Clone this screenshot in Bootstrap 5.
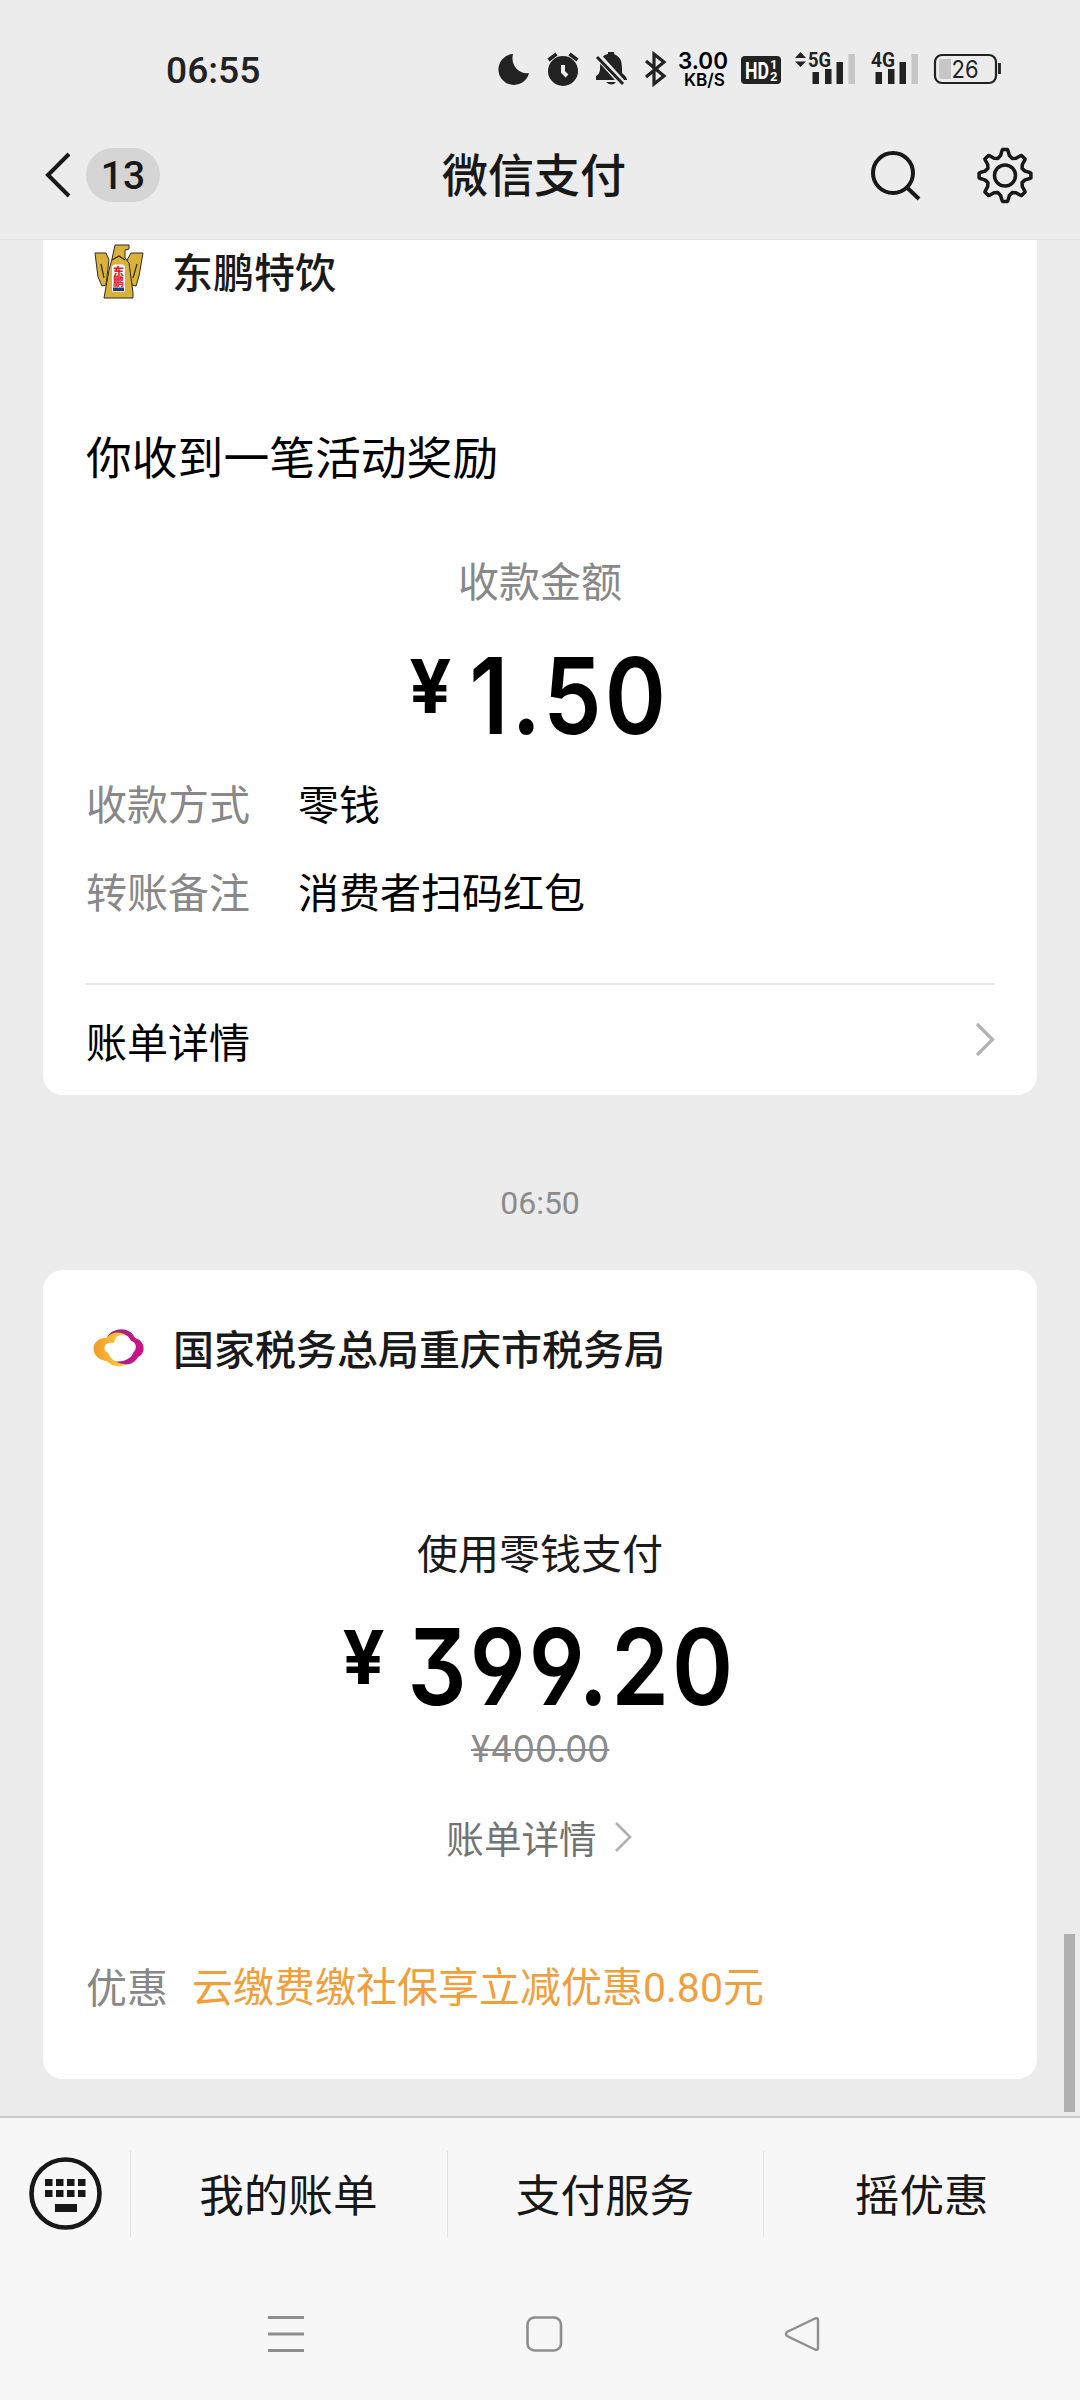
<!DOCTYPE html>
<html lang="zh-CN">
<head>
<meta charset="utf-8">
<meta name="viewport" content="width=device-width, initial-scale=1">
<title>微信支付</title>
<link href="https://cdn.jsdelivr.net/npm/bootstrap@5.3.0/dist/css/bootstrap.min.css" rel="stylesheet">
<style>
body{width:1080px;height:2400px;overflow:hidden;background:#ececec;color:#000;font-family:"Noto Sans CJK SC",sans-serif;font-size:41px;line-height:60px}
svg{display:block;flex:none;overflow:visible}
.statusbar{height:110px;padding-left:166px}
.clock{width:334px;font:500 37.2px/60px Roboto,sans-serif;color:#222;padding-top:40px}
.sysicons{padding-top:50px}
.topbar{height:130px;color:#181818;border-bottom:1px solid #e0e0e0}
.unread{width:74px;height:54px;background:#d5d5d5;border-radius:27px;font:500 39px/56px Roboto,sans-serif;margin-left:6px}
.apptitle{font-size:46px;font-weight:500;margin-left:282px;margin-top:-5px}
.chat{height:1876px;position:relative}
.paycard{margin:0 43px;background:#fff;padding:0 43px}
.first{border-radius:0 0 20px 20px;height:855px}
.second{border-radius:20px;height:809px}
.muted{color:#888}
.payee{font-weight:500;color:#1a1a1a;height:66px}
.payee span{margin-left:17px;margin-top:-6px}
.payee.head2 span{margin-left:16px;margin-top:-5px}
.head2{height:158px}
.notice{font-size:45.8px;margin-top:119px}
.lbl{height:50px;line-height:50px}
.amount{height:104px;font:600 106px/104px Inter,sans-serif;font-feature-settings:"ss01","cv04","cv09"}
.yen{font-size:74px;font-weight:700;line-height:85px}
.digits{transform:scaleX(.875);letter-spacing:3.5px;white-space:nowrap}
.amt-a .yen{margin-left:13px}
.amt-a .digits{margin-left:4px}
.amt-b .yen{margin-left:22px}
.amt-b .digits{margin-left:-1px}
.field span:first-child{width:212px}
.billrow{height:112px;border-top:2px solid #e5e5e5;margin-top:63px}
.stamp{height:175px;padding-top:41px;font:400 32px/134px Roboto,sans-serif;color:#8b8b8b}
.oldprice{height:40px;margin-top:10px;font:400 37px/40px Inter,sans-serif;color:#8a8a8a}
.oldprice s{display:inline-block;transform:scaleX(.945);text-decoration-thickness:2px}
.more{font-size:37.6px;color:#737373;margin-top:43px;gap:17px}
.promo{color:#f19f3c;font-family:Roboto,"Noto Sans CJK SC",sans-serif;margin-left:24px;padding-top:3px}
.thumb{position:absolute;left:1064px;top:1694px;width:11px;height:178px;background:#b0b0b0}
.menubar{height:154px;background:#f7f7f7;border-top:2px solid #cbcbcb;color:#181818;font-size:44.6px}
.menubar a{color:inherit;text-decoration:none;width:317px;height:86px;border-left:1px solid #e2e2e2;line-height:83px;padding-right:1px}
.navkeys{height:130px;background:#f7f7f7;padding-left:266px}
</style>
</head>
<body>
<div class="statusbar d-flex">
  <div class="clock">06:55</div>
  <div class="sysicons d-flex">
    <svg width="40" height="40" viewBox="500 50 40 40"><path d="M513 54A15.500 15.500 0 1 0 529 73C520 75 510 66 513 54Z" fill="#222"/></svg>
    <svg width="50" height="40" viewBox="540 50 50 40"><circle cx="563" cy="71" r="15" fill="#222"/><path d="M548.500 60L556.500 54M577.500 60L569.500 54" stroke="#222" stroke-width="3.500"/><path d="M563 65V72L567 76" stroke="#ececec" stroke-width="4" fill="none"/></svg>
    <svg width="50" height="40" viewBox="590 50 50 40"><path d="M600 69Q600 55 608 54V52H614V54Q622 57 622 67V73Q627 77 627 80H596V76Q600 74 600 69ZM606 82H616Q612 87 606 82Z" fill="#222"/><path d="M597 55L624 85" stroke="#ececec" stroke-width="7"/><path d="M597 57L623 84" stroke="#222" stroke-width="3"/></svg>
    <svg width="35" height="40" viewBox="640 50 35 40"><path d="M646 61L664 76L654 84V54L664 62L646 77" fill="none" stroke="#222" stroke-width="3.200"/></svg>
    <svg width="60" height="40" viewBox="675 50 60 40"><g font-family="Inter,sans-serif" font-weight="600" fill="#000"><text x="678" y="69" font-size="23.500" textLength="50" lengthAdjust="spacingAndGlyphs">3.00</text><text x="684" y="86" font-size="17.500" textLength="41" lengthAdjust="spacingAndGlyphs">KB/S</text></g></svg>
    <svg width="55" height="40" viewBox="735 50 55 40"><rect x="741" y="56" width="40" height="28" rx="4" fill="#222"/><g fill="#fff" font-family="Roboto,sans-serif" font-weight="700"><text x="745" y="78.500" font-size="23" textLength="24" lengthAdjust="spacingAndGlyphs">HD</text><text x="770" y="69" font-size="13">1</text><text x="770" y="80.500" font-size="13">2</text></g></svg>
    <svg width="75" height="40" viewBox="790 50 75 40"><path d="M795 58L800.500 52L806 58ZM795 61.500L800.500 67L806 61.500Z" fill="#222"/><text x="808" y="67" font-family="Roboto,sans-serif" font-weight="700" font-size="21" fill="#222" textLength="23" lengthAdjust="spacingAndGlyphs">5G</text><path d="M812.500 72h6.500v12h-6.500zM825 69h6.500v15H825zM836.500 62h6.500v22h-6.500z" fill="#222"/><path d="M848.500 54h6.500v30h-6.500z" fill="#c6c6c6"/></svg>
    <svg width="65" height="40" viewBox="865 50 65 40"><text x="871" y="67" font-family="Roboto,sans-serif" font-weight="700" font-size="21" fill="#222" textLength="24" lengthAdjust="spacingAndGlyphs">4G</text><path d="M875.500 72h6.500v12h-6.500zM888 69h6.500v15H888zM899.500 62h6.500v22h-6.500z" fill="#222"/><path d="M911.500 54h6.500v30h-6.500z" fill="#c6c6c6"/></svg>
    <svg width="80" height="40" viewBox="930 50 80 40"><path d="M939 60q0-1 2-1H951V79H941q-2 0-2-2Z" fill="#c6c6c6"/><rect x="935" y="55" width="61" height="28" rx="7" fill="none" stroke="#222" stroke-width="2.200"/><path d="M999.500 63V74" stroke="#222" stroke-width="2.800"/><text x="951.500" y="78" font-family="Inter,sans-serif" font-size="24" fill="#222" textLength="27" lengthAdjust="spacingAndGlyphs">26</text></svg>
  </div>
</div>
<header class="topbar d-flex align-items-center">
  <svg width="80" height="60" viewBox="0 145 80 60"><path d="M69 154L48 175L69 196" fill="none" stroke="#181818" stroke-width="4"/></svg>
  <div class="unread text-center">13</div>
  <div class="apptitle">微信支付</div>
  <svg class="ms-auto" width="80" height="60" viewBox="866 145 80 60"><g fill="none" stroke="#181818" stroke-width="4"><circle cx="893" cy="173" r="20"/><path d="M907 187.500L919 199"/></g></svg>
  <svg width="110" height="60" viewBox="970 145 110 60" class="ms-4"><g fill="none" stroke="#181818" stroke-width="3.500" stroke-linejoin="round"><circle cx="1005" cy="175.500" r="10.500"/><path id="gear"/></g></svg>
</header>
<main class="chat">
  <section class="paycard first">
    <div class="payee d-flex align-items-center">
      <svg width="69" height="66" viewBox="86 240 69 66"><g fill="#d9b23c" stroke="#32291f" stroke-width="1"><path d="M95 253H106L109 260L106 285L102 286L98 277Z M143 253H131L127 260L132 285L136 286L139 276Z"/><path d="M115 245H129V249L125 250V258L129 263L133 293V298H104L109 270L112 259Z"/></g><path d="M112 260L119 256L125 260M101 264L104 278M137 264L133 278" fill="none" stroke="#32291f" stroke-width="1.200"/><path d="M114 264.500h9l2 2v25h-13v-25z" fill="#fff"/><g font-family="Noto Sans CJK SC,sans-serif" font-weight="900" fill="#e51d2e" font-size="11"><text x="113" y="275.500">东</text><text x="113" y="286">鹏</text></g><path d="M113 287.500h11v3.500h-11z" fill="#223a78"/></svg>
      <span>东鹏特饮</span>
    </div>
    <div class="notice">你收到一笔活动奖励</div>
    <div class="lbl muted text-center" style="margin-top:69px">收款金额</div>
    <div class="amount amt-a d-flex justify-content-center" style="margin-top:40px"><span class="yen">¥</span><span class="digits">1.50</span></div>
    <div class="field d-flex" style="margin-top:24px"><span class="muted">收款方式</span><span>零钱</span></div>
    <div class="field d-flex" style="margin-top:28px"><span class="muted">转账备注</span><span>消费者扫码红包</span></div>
    <div class="billrow d-flex align-items-center justify-content-between"><span>账单详情</span>
      <svg width="18" height="40" viewBox="976 1020 18 40"><path d="M977 1024L992.500 1039.500L977 1055" fill="none" stroke="#b2b2b2" stroke-width="3.200"/></svg></div>
  </section>
  <div class="stamp text-center">06:50</div>
  <section class="paycard second">
    <div class="payee head2 d-flex align-items-center">
      <svg width="71" height="60" viewBox="86 1319 71 60"><defs><linearGradient id="gold"><stop offset="0" stop-color="#f39a2d"/><stop offset="1" stop-color="#fbd437"/></linearGradient><linearGradient id="pink"><stop offset="0" stop-color="#8b2c86"/><stop offset="1" stop-color="#d30f83"/></linearGradient></defs><path fill="url(#pink)" d="M107 1337C113 1327 130 1326 135 1338C146 1341 146 1354 138 1357C133 1367 119 1366 112 1361C123 1363 131 1359 133 1353C138 1348 136 1342 131 1341C127 1331 116 1333 107 1337Z"/><path fill="url(#gold)" d="M127 1336C119 1333 115 1337 114 1343C107 1342 103 1345 105 1351C109 1352 109 1356 112 1359C116 1362 120 1364 126 1364C119 1369 110 1365 107 1361C94 1360 90 1347 97 1341C100 1338 103 1338 106 1338C113 1331 121 1331 127 1336Z"/></svg>
      <span>国家税务总局重庆市税务局</span>
    </div>
    <div class="text-center" style="color:#1a1a1a;margin-top:93px">使用零钱支付</div>
    <div class="amount amt-b d-flex justify-content-center" style="margin-top:34px"><span class="yen">¥</span><span class="digits">399.20</span></div>
    <div class="oldprice text-center"><s>¥400.00</s></div>
    <div class="more lbl d-flex justify-content-center align-items-center"><span>账单详情</span>
      <svg width="20" height="34" viewBox="613 1821 20 34"><path d="M615 1824L629 1838L615 1852" fill="none" stroke="#b2b2b2" stroke-width="2.800"/></svg></div>
    <div class="d-flex" style="margin-top:93px"><span class="muted">优惠</span><span class="promo">云缴费缴社保享立减优惠0.80元</span></div>
  </section>
  <div class="thumb"></div>
</main>
<footer>
  <nav class="menubar d-flex align-items-center text-center">
    <svg width="130" height="80" viewBox="0 2154 130 80"><circle cx="65.500" cy="2193.500" r="34" fill="none" stroke="#181818" stroke-width="4.600"/><path d="M45 2179h7.500v7H45zM56 2179h7.500v7H56zM67 2179h7.500v7H67zM78 2179h7.500v7H78zM45 2190h7.500v7H45zM56 2190h7.500v7H56zM67 2190h7.500v7H67zM78 2190h7.500v7H78zM55 2204h22v8H55z" fill="#181818"/></svg>
    <a href="#">我的账单</a><a href="#">支付服务</a><a href="#">摇优惠</a>
  </nav>
  <div class="navkeys d-flex">
    <svg width="258" height="130" viewBox="266 2270 258 130"><path d="M268 2317.500H304M268 2334H304M268 2350.500H304" stroke="#8e8e8e" stroke-width="2.800"/></svg>
    <svg width="258" height="130" viewBox="524 2270 258 130"><rect x="527.500" y="2317.500" width="33.500" height="33" rx="7" fill="none" stroke="#8e8e8e" stroke-width="2.600"/></svg>
    <svg width="60" height="130" viewBox="782 2270 60 130"><path d="M815 2318.500L787 2332Q785 2334 787 2336L815 2349.500Q818 2350.500 818 2348V2320Q818 2317.500 815 2318.500Z" fill="none" stroke="#8e8e8e" stroke-width="2.400"/></svg>
  </div>
</footer>
<script src="https://cdn.jsdelivr.net/npm/bootstrap@5.3.0/dist/js/bootstrap.bundle.min.js"></script>
<script>
/* Eight-tooth settings gear outline: [angle, radius] points of one tooth, repeated every 45 degrees */
(function(){
  var pts=[];
  for(var i=0;i<8;i++){
    [[-22.5,18.5],[-12.5,20.5],[-7,25],[-5.5,26],[5.5,26],[7,25],[12.5,20.5]].forEach(function(p){
      var a=(i*45+p[0]-90)*Math.PI/180;
      pts.push((1005+p[1]*Math.cos(a)).toFixed(1)+' '+(175.5+p[1]*Math.sin(a)).toFixed(1));
    });
  }
  document.getElementById('gear').setAttribute('d','M'+pts.join('L')+'Z');
})();
</script>
</body>
</html>
